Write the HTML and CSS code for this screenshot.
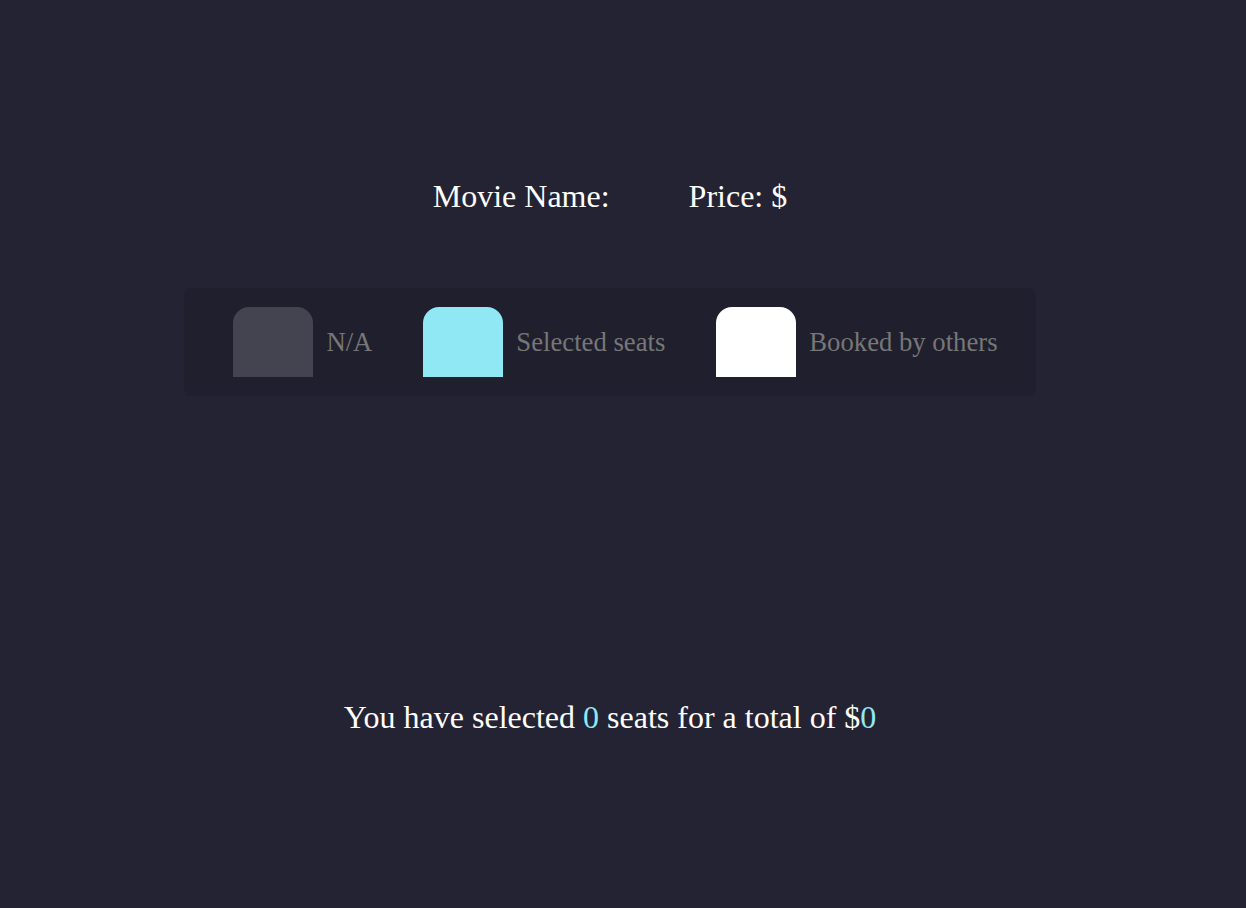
FILE: index.html
```html
<!DOCTYPE html>
<html lang="en">

<head>
    <meta charset="UTF-8" />
    <meta name="viewport" content="width=device-width, initial-scale=1.0" />
    <link rel="stylesheet" href="styles.css">
</head>

<body>
    <main class="container">
        <div class="movie-info">
            <span>Movie Name: <span id="movie"></span></span>
            <span>Price: $<span id="price"></span></span>
        </div>

        <ul class="showcase">
            <li>
                <div class="seat"></div>
                <small>N/A</small>
            </li>
            <li>
                <div class="seat selected"></div>
                <small>Selected seats</small>
            </li>
            <li>
                <div class="seat occupied"></div>
                <small>Booked by others</small>
            </li>
        </ul>

        <p class="text">
            You have selected <span id="count">0</span> seats for a total of $<span id="total">0</span>
        </p>
    </main>
</body>

</html>
```

FILE: styles.css
```css
* {
    box-sizing: border-box;
}

body {
    margin: 0;
    padding-right: 26px;
    min-height: 100vh;
    background-color: #242333;
    color: #fff;
    font-family: "Liberation Serif", "Times New Roman", serif;
}

.container {
    display: flex;
    flex-direction: column;
    align-items: center;
    padding-top: 178px;
}

.movie-info {
    display: flex;
    gap: 79px;
    font-size: 32px;
    line-height: 36px;
}

.showcase {
    display: flex;
    gap: 51px;
    list-style: none;
    margin: 74px 0 0;
    padding: 19px 38px 19px 49px;
    background-color: rgba(0, 0, 0, 0.1);
    border-radius: 6px;
}

.showcase li {
    display: flex;
    align-items: center;
    gap: 13px;
}

.showcase small {
    font-size: 26.7px;
    color: #777;
}

.seat {
    width: 80px;
    height: 70px;
    background-color: #444451;
    border-top-left-radius: 16px;
    border-top-right-radius: 16px;
}

.seat.selected {
    background-color: #8fe8f4;
}

.seat.occupied {
    background-color: #fff;
}

.text {
    margin: 303px 0 0;
    font-size: 32px;
    line-height: 36px;
}

.text span {
    color: #8fe8f4;
}
```
